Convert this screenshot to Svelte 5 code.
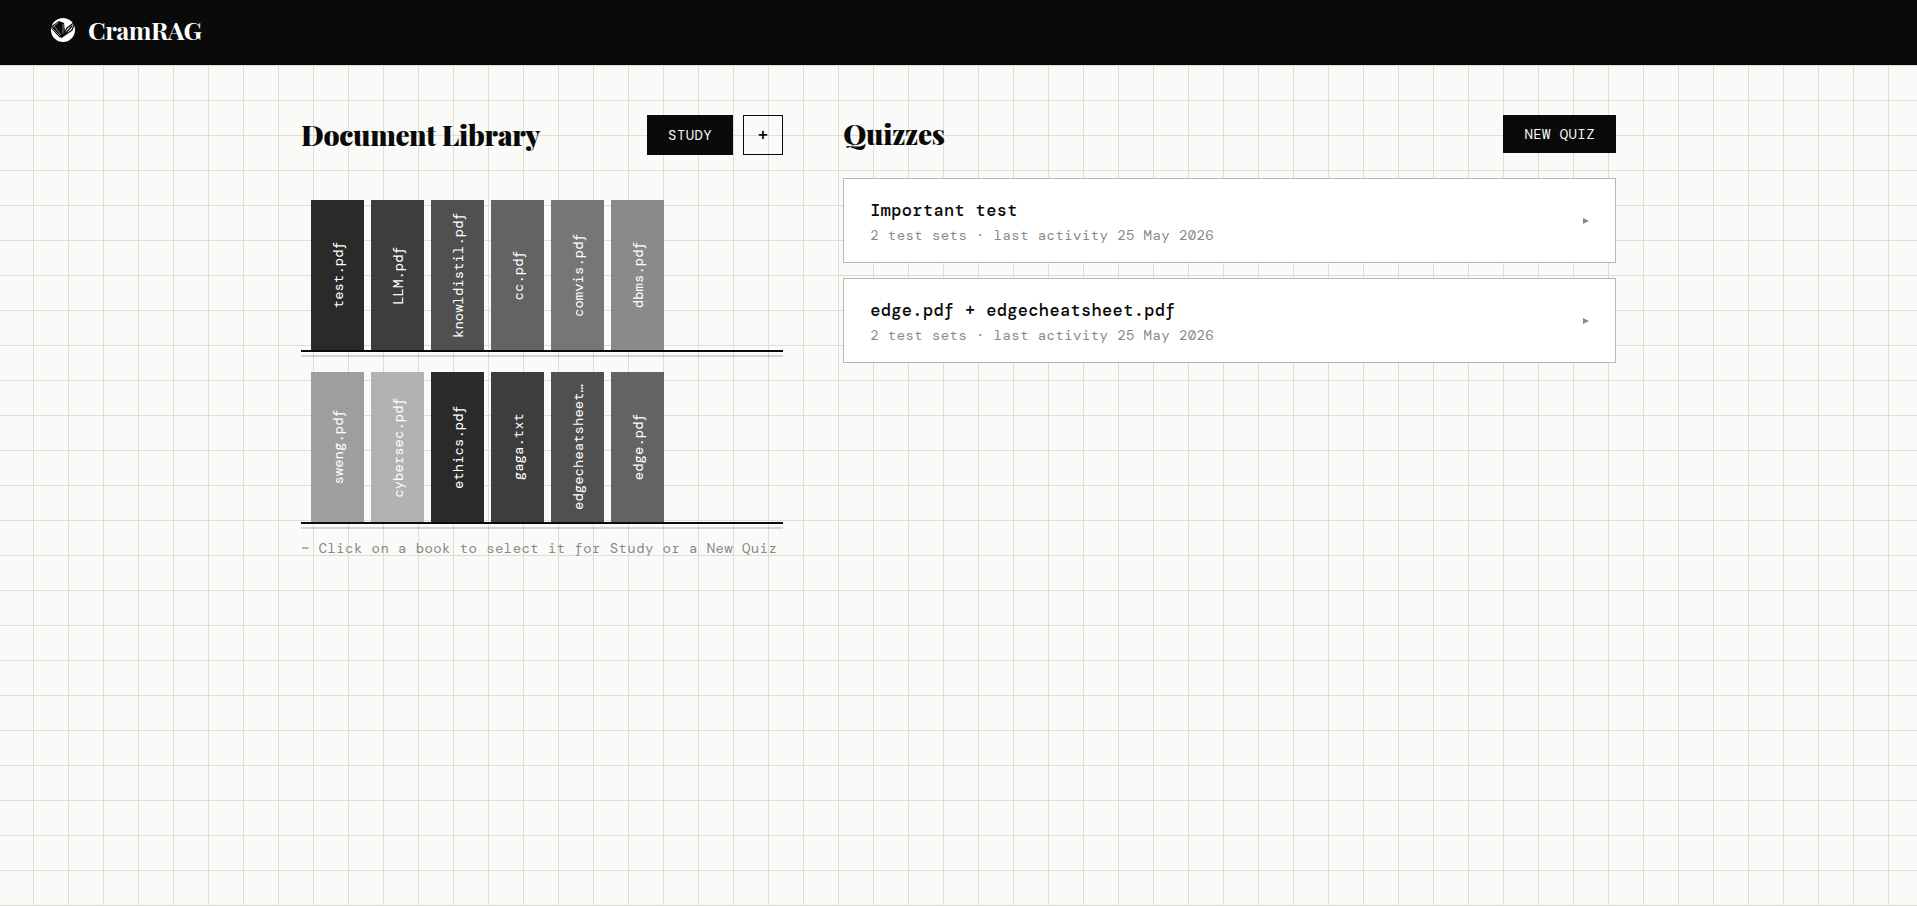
<script>
  const shades = ["#2a2a2a", "#3d3d3d", "#505050", "#636363", "#767676", "#8a8a8a", "#9e9e9e", "#b2b2b2"];
  const perShelf = 6;

  let docs = $state([
    "test.pdf",
    "LLM.pdf",
    "knowldistil.pdf",
    "cc.pdf",
    "comvis.pdf",
    "dbms.pdf",
    "sweng.pdf",
    "cybersec.pdf",
    "ethics.pdf",
    "gaga.txt",
    "edgecheatsheet.pdf",
    "edge.pdf",
  ]);
  let quizzes = $state([
    { title: "Important test", sets: 2, last: "25 May 2026" },
    { title: "edge.pdf + edgecheatsheet.pdf", sets: 2, last: "25 May 2026" },
  ]);
  let selected = $state([]);

  let shelves = $derived.by(() => {
    const rows = [];
    const books = docs.map((name, i) => ({ name, color: shades[i % shades.length] }));
    for (let i = 0; i < books.length; i += perShelf) {
      rows.push(books.slice(i, i + perShelf));
    }
    return rows;
  });

  // spines only have room for 15 characters
  function spine(name) {
    return name.length > 15 ? name.slice(0, 14) + "…" : name;
  }

  function toggle(name) {
    if (selected.includes(name)) selected = selected.filter((n) => n !== name);
    else selected = [...selected, name];
  }
</script>

<div class="page">
  <header>
    <a class="brand" href="/">
      <svg class="logo" viewBox="0 0 26 26" aria-hidden="true">
        <circle cx="13" cy="13" r="12" fill="#fff" />
        <path d="M0 10 L9 4 L14 6 L15 15 L12 21 L9 20 Z" fill="#0a0a0a" />
        <path
          d="M1 11 L8 6 M2 11 L10 19 M4 9 L11 18 M13 7 L13 17"
          fill="none"
          stroke="#fff"
          stroke-width="0.5"
        />
        <path
          d="M12 20 L17 11 L25 5 L22 13 Z M14 18 L22 9"
          fill="none"
          stroke="#0a0a0a"
          stroke-width="1.2"
        />
      </svg>
      <span>CramRAG</span>
    </a>
  </header>

  <main>
    <section>
      <div class="head">
        <h2>Document Library</h2>
        <div class="actions">
          <button class="btn">STUDY</button>
          <button class="btn add" aria-label="Add document">+</button>
        </div>
      </div>
      <div class="library">
        {#each shelves as shelf}
          <div>
            <div class="shelf">
              {#each shelf as book}
                <button
                  class="book"
                  class:selected={selected.includes(book.name)}
                  style="background-color: {book.color}"
                  title={book.name}
                  onclick={() => toggle(book.name)}
                >
                  <span>{spine(book.name)}</span>
                </button>
              {/each}
            </div>
            <div class="plank"></div>
          </div>
        {/each}
      </div>
      <p class="hint">~ Click on a book to select it for Study or a New Quiz</p>
    </section>

    <section>
      <div class="head">
        <h2>Quizzes</h2>
        <button class="btn">NEW QUIZ</button>
      </div>
      <div class="quizzes">
        {#each quizzes as quiz}
          <button class="quiz">
            <span class="info">
              <span class="title">{quiz.title}</span>
              <span class="meta">{quiz.sets} test sets · last activity {quiz.last}</span>
            </span>
            <svg class="arrow" viewBox="0 0 6 6" aria-hidden="true"><path d="M0 0 L6 3 L0 6 Z" /></svg>
          </button>
        {/each}
      </div>
    </section>
  </main>
</div>

<style>
  :global(body) {
    margin: 0;
    background-color: #fafaf8;
    background-image:
      linear-gradient(#ddddd5 1px, transparent 1px),
      linear-gradient(90deg, #ddddd5 1px, transparent 1px);
    background-size: 35px 35px;
    background-position: 33px 65px;
  }

  .page {
    color: #0a0a0a;
    font-family: "DM Mono", "Liberation Mono", monospace;
    font-size: 14px;
    letter-spacing: 0.03em;
  }

  header {
    display: flex;
    align-items: center;
    box-sizing: border-box;
    height: 65px;
    padding: 0 50px 6px;
    background: #0a0a0a;
  }

  .brand {
    display: flex;
    align-items: center;
    gap: 12px;
    color: #fff;
    font-family: "Playfair Display", "Liberation Serif", serif;
    font-size: 25px;
    font-weight: 700;
    letter-spacing: -0.02em;
    line-height: 32px;
    text-decoration: none;
  }

  .logo {
    width: 26px;
    height: 26px;
  }

  main {
    display: grid;
    grid-template-columns: 0.624fr 1fr;
    gap: 60px;
    max-width: 1315px;
    margin: 0 auto;
    padding: 50px 40px;
  }

  .head {
    display: flex;
    align-items: center;
    justify-content: space-between;
    margin-bottom: 25px;
  }

  h2 {
    margin: 0;
    font-family: "Playfair Display", "Liberation Serif", serif;
    font-size: 28px;
    font-weight: 900;
    letter-spacing: -0.01em;
    line-height: 38px;
  }

  .actions {
    display: flex;
    gap: 10px;
  }

  button {
    font-family: inherit;
    letter-spacing: inherit;
    cursor: pointer;
  }

  .btn {
    padding: 9px 20px;
    border: 1px solid #0a0a0a;
    background: #0a0a0a;
    color: #fafaf8;
    font-size: 14px;
    line-height: 18px;
  }

  .add {
    width: 40px;
    height: 40px;
    padding: 0;
    background: transparent;
    color: #0a0a0a;
    font-size: 18px;
    font-weight: 500;
  }

  .library {
    display: flex;
    flex-direction: column;
    gap: 15px;
    padding-top: 20px;
  }

  .shelf {
    display: flex;
    gap: 7px;
    padding: 0 10px;
  }

  .book {
    display: flex;
    align-items: center;
    justify-content: center;
    width: 53px;
    height: 150px;
    padding: 0;
    border: 0;
    color: #fff;
    font-size: 14px;
    letter-spacing: 0;
  }

  .book span {
    white-space: nowrap;
    writing-mode: vertical-rl;
    rotate: 180deg;
  }

  .book.selected {
    outline: 2px solid #0a0a0a;
    outline-offset: 2px;
  }

  .plank {
    height: 3px;
    border-top: 2px solid #0a0a0a;
    border-bottom: 2px solid rgba(10, 10, 10, 0.15);
  }

  .hint {
    margin: 10px 0 0;
    color: #888;
    line-height: 18px;
  }

  .quizzes {
    display: flex;
    flex-direction: column;
    gap: 15px;
  }

  .quiz {
    display: flex;
    align-items: center;
    justify-content: space-between;
    padding: 18px 26px;
    border: 1px solid #b8b8ae;
    background: #fff;
    color: #0a0a0a;
    text-align: left;
  }

  .info {
    display: flex;
    flex-direction: column;
    gap: 3px;
  }

  .title {
    font-size: 17px;
    font-weight: 500;
    letter-spacing: 0.02em;
    line-height: 26px;
  }

  .meta {
    color: #888;
    font-size: 14px;
    line-height: 18px;
  }

  .arrow {
    width: 6px;
    height: 6px;
    fill: #888;
  }

  @media (max-width: 1000px) {
    main {
      grid-template-columns: 1fr;
    }
  }
</style>
